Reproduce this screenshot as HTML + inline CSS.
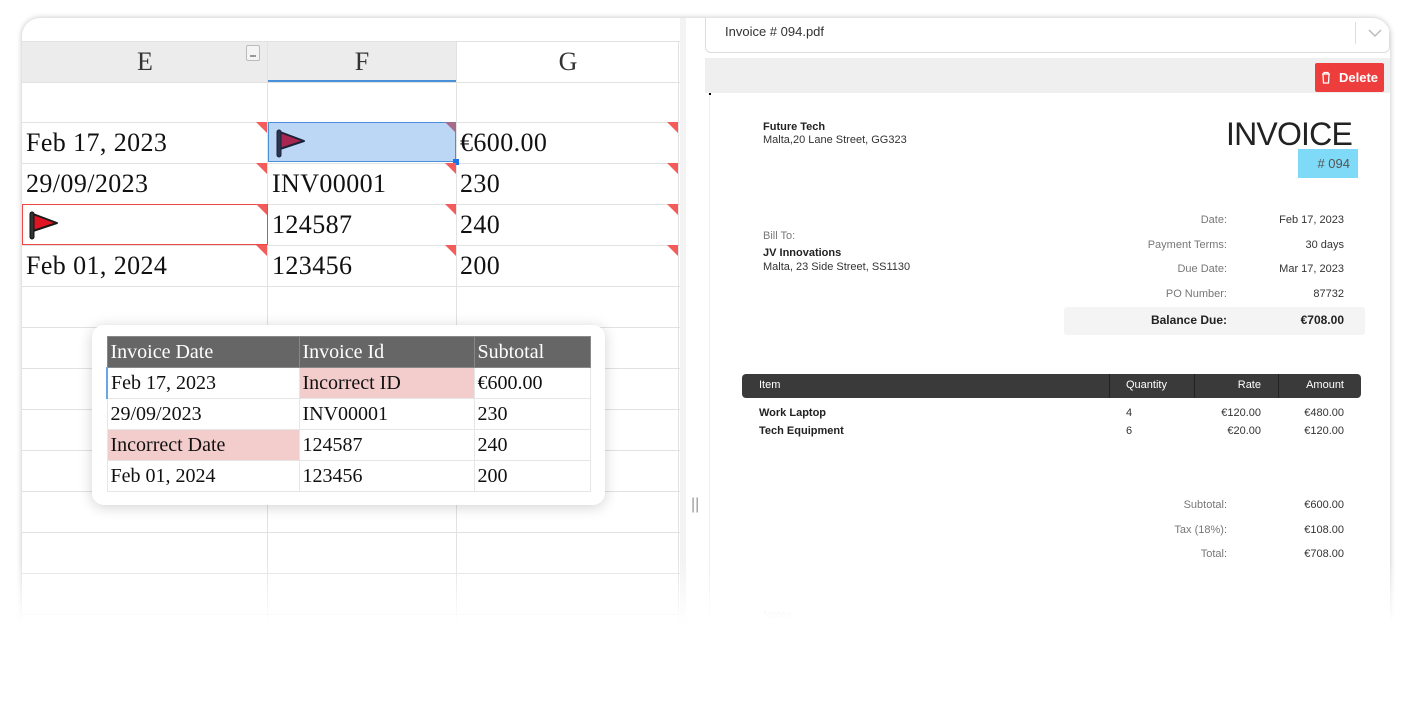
<!DOCTYPE html>
<html><head><meta charset="utf-8"><style>
*{box-sizing:border-box;margin:0;padding:0}
body{width:1412px;height:720px;background:#fff;position:relative;overflow:hidden;font-family:"Liberation Sans",sans-serif}
.card{position:absolute;left:22px;top:18px;width:1368px;height:640px;background:#fff;border-radius:18px;box-shadow:0 0 6px rgba(0,0,0,.25);overflow:hidden}
.abs{position:absolute}
.serif{font-family:"Liberation Serif",serif;color:#111}
.hl{position:absolute;height:1px;background:#e2e2e2}
.vl{position:absolute;width:1px;background:#e2e2e2}
.tri{position:absolute;width:0;height:0;border-top:11px solid #f45b5b;border-left:11px solid transparent}
.cell{position:absolute;font-size:26px;font-family:"Liberation Serif",serif;color:#111;line-height:41px;letter-spacing:0.4px}
.inv{position:absolute;font-size:11px;color:#333}
.r{text-align:right}
.fade{position:absolute;left:0;top:560px;width:1412px;height:160px;background:linear-gradient(rgba(255,255,255,0),#fff 40%)}
.pt td{border:1px solid #e6e6e6;height:31px;font-family:"Liberation Serif",serif;font-size:20px;color:#111;padding:0 3px;vertical-align:middle}
</style></head><body>
<div class="card">
 <div class="abs" style="left:0;top:24px;width:434px;height:40px;background:#ececec"></div>
 <div class="abs" style="left:246px;top:62px;width:188px;height:2px;background:#4a90d9"></div>
 <div class="hl" style="left:0;top:23px;width:660px"></div>
 <div class="hl" style="left:0;top:64px;width:660px"></div>
 <div class="abs serif" style="left:0;top:24px;width:246px;text-align:center;font-size:26px;line-height:40px;color:#333">E</div>
 <div class="abs serif" style="left:246px;top:24px;width:188px;text-align:center;font-size:26px;line-height:40px;color:#333">F</div>
 <div class="abs serif" style="left:435px;top:24px;width:222px;text-align:center;font-size:26px;line-height:40px;color:#333">G</div>
 <div class="abs" style="left:224px;top:27px;width:14px;height:16px;border:1px solid #bbb;border-radius:2px;background:#f4f4f4"></div>
 <div class="abs" style="left:228px;top:37px;width:6px;height:2px;background:#999"></div>
 <div class="hl" style="left:0;top:104px;width:660px"></div>
 <div class="hl" style="left:0;top:145px;width:660px"></div>
 <div class="hl" style="left:0;top:186px;width:660px"></div>
 <div class="hl" style="left:0;top:227px;width:660px"></div>
 <div class="hl" style="left:0;top:268px;width:660px"></div>
 <div class="hl" style="left:0;top:309px;width:660px"></div>
 <div class="hl" style="left:0;top:350px;width:660px"></div>
 <div class="hl" style="left:0;top:391px;width:660px"></div>
 <div class="hl" style="left:0;top:432px;width:660px"></div>
 <div class="hl" style="left:0;top:473px;width:660px"></div>
 <div class="hl" style="left:0;top:514px;width:660px"></div>
 <div class="hl" style="left:0;top:555px;width:660px"></div>
 <div class="hl" style="left:0;top:596px;width:660px"></div>
 <div class="vl" style="left:245px;top:23px;height:600px"></div>
 <div class="vl" style="left:434px;top:23px;height:600px"></div>
 <div class="vl" style="left:656px;top:23px;height:600px"></div>
 <div class="abs" style="left:658px;top:0;width:6px;height:640px;background:#f3f3f3"></div>
 <div class="abs" style="left:246px;top:104px;width:188px;height:40px;background:#bcd7f6;border:1.5px solid #4a90d9"></div>
 <div class="abs" style="left:431px;top:141px;width:6px;height:6px;background:#1a73e8"></div>
 <div class="abs" style="left:0;top:186px;width:246px;height:41px;border:1.5px solid #f04646"></div>
 <div class="tri" style="left:234px;top:104px"></div>
 <div class="tri" style="left:234px;top:145px"></div>
 <div class="tri" style="left:234px;top:186px"></div>
 <div class="tri" style="left:234px;top:227px"></div>
 <div class="tri" style="left:423px;top:104px;border-top-color:#a66b8a"></div>
 <div class="tri" style="left:423px;top:145px"></div>
 <div class="tri" style="left:423px;top:186px"></div>
 <div class="tri" style="left:423px;top:227px"></div>
 <div class="tri" style="left:645px;top:104px"></div>
 <div class="tri" style="left:645px;top:145px"></div>
 <div class="tri" style="left:645px;top:186px"></div>
 <div class="tri" style="left:645px;top:227px"></div>
 <div class="cell" style="left:4px;top:104px">Feb 17, 2023</div>
 <div class="cell" style="left:4px;top:145px">29/09/2023</div>
 <div class="cell" style="left:4px;top:227px">Feb 01, 2024</div>
 <div class="cell" style="left:250px;top:145px">INV00001</div>
 <div class="cell" style="left:250px;top:186px">124587</div>
 <div class="cell" style="left:250px;top:227px">123456</div>
 <div class="cell" style="left:438px;top:104px">€600.00</div>
 <div class="cell" style="left:438px;top:145px">230</div>
 <div class="cell" style="left:438px;top:186px">240</div>
 <div class="cell" style="left:438px;top:227px">200</div>
 <svg class="abs" style="left:252px;top:109px" width="36" height="32" viewBox="0 0 36 32"><path d="M6 5 L30 14 L6 22 Z" fill="#a8254f" stroke="#1a2238" stroke-width="2" stroke-linejoin="round"/><rect x="3" y="3" width="4" height="27" rx="2" fill="#2b3550" stroke="#1a2238" stroke-width="1"/></svg>
 <svg class="abs" style="left:5px;top:191px" width="36" height="32" viewBox="0 0 36 32"><path d="M6 5 L30 14 L6 22 Z" fill="#e01524" stroke="#1a1a1a" stroke-width="2" stroke-linejoin="round"/><rect x="3" y="3" width="4" height="27" rx="2" fill="#333" stroke="#111" stroke-width="1"/></svg>
 <div class="abs" style="left:669px;top:478px;font-size:16px;color:#999">||</div>

 <div class="abs" style="left:683px;top:-4px;width:685px;height:39px;border:1px solid #ddd;border-radius:0 0 6px 6px;background:#fff"></div>
 <div class="abs" style="left:703px;top:6px;font-size:13px;color:#333">Invoice # 094.pdf</div>
 <div class="abs" style="left:1333px;top:4px;width:1px;height:22px;background:#ddd"></div>
 <svg class="abs" style="left:1346px;top:10px" width="14" height="10"><path d="M1 2 L7 8 L13 2" fill="none" stroke="#bbb" stroke-width="1.5"/></svg>
 <div class="abs" style="left:683px;top:40px;width:685px;height:35px;background:#efefef"></div>
 <div class="abs" style="left:1293px;top:45px;width:69px;height:29px;background:#ee3d3d;border-radius:2px;color:#fff;font-size:13px;font-weight:bold;line-height:29px;padding-left:24px">Delete</div>
 <svg class="abs" style="left:1299px;top:53px" width="10" height="13"><path d="M1 3 H9 M3 3 V1.5 H7 V3 M2 3 L2.5 12 H7.5 L8 3" fill="none" stroke="#fff" stroke-width="1.3"/></svg>
 <div class="abs" style="left:687px;top:75px;width:681px;height:565px;background:#fff;border-left:1px solid #eee"></div>
 <div class="abs" style="left:687px;top:75px;width:2px;height:2px;background:#000"></div>

 <div class="inv" style="left:741px;top:103px;font-weight:bold;color:#222">Future Tech</div>
 <div class="inv" style="left:741px;top:116px">Malta,20 Lane Street, GG323</div>
 <div class="abs" style="left:1150px;top:98px;width:180px;text-align:right;font-size:32px;color:#222;letter-spacing:-0.8px">INVOICE</div>
 <div class="abs" style="left:1276px;top:131px;width:60px;height:29px;background:#7fdaf7"></div>
 <div class="abs" style="left:1276px;top:138px;width:52px;text-align:right;font-size:13px;color:#555">#&nbsp;094</div>

 <div class="inv" style="left:741px;top:212px;color:#777">Bill To:</div>
 <div class="inv" style="left:741px;top:229px;font-weight:bold;color:#222">JV Innovations</div>
 <div class="inv" style="left:741px;top:243px">Malta, 23 Side Street, SS1130</div>

 <div class="inv r" style="left:1040px;top:196px;width:165px;color:#777">Date:</div>
 <div class="inv r" style="left:1230px;top:196px;width:92px">Feb 17, 2023</div>
 <div class="inv r" style="left:1040px;top:221px;width:165px;color:#777">Payment Terms:</div>
 <div class="inv r" style="left:1230px;top:221px;width:92px">30 days</div>
 <div class="inv r" style="left:1040px;top:245px;width:165px;color:#777">Due Date:</div>
 <div class="inv r" style="left:1230px;top:245px;width:92px">Mar 17, 2023</div>
 <div class="inv r" style="left:1040px;top:270px;width:165px;color:#777">PO Number:</div>
 <div class="inv r" style="left:1230px;top:270px;width:92px">87732</div>
 <div class="abs" style="left:1042px;top:289px;width:301px;height:28px;background:#f4f4f4;border-radius:3px"></div>
 <div class="inv r" style="left:1040px;top:295px;width:165px;font-size:12px;font-weight:bold;color:#222">Balance Due:</div>
 <div class="inv r" style="left:1230px;top:295px;width:92px;font-size:12px;font-weight:bold;color:#222">€708.00</div>

 <div class="abs" style="left:720px;top:356px;width:619px;height:24px;background:#3a3a3a;border-radius:4px"></div>
 <div class="abs" style="left:1087px;top:356px;width:1px;height:24px;background:#222"></div>
 <div class="abs" style="left:1172px;top:356px;width:1px;height:24px;background:#222"></div>
 <div class="abs" style="left:1256px;top:356px;width:1px;height:24px;background:#222"></div>
 <div class="inv" style="left:737px;top:361px;color:#fff">Item</div>
 <div class="inv" style="left:1104px;top:361px;color:#fff">Quantity</div>
 <div class="inv r" style="left:1180px;top:361px;width:59px;color:#fff">Rate</div>
 <div class="inv r" style="left:1260px;top:361px;width:62px;color:#fff">Amount</div>
 <div class="inv" style="left:737px;top:389px;font-weight:bold;color:#222">Work Laptop</div>
 <div class="inv" style="left:737px;top:407px;font-weight:bold;color:#222">Tech Equipment</div>
 <div class="inv" style="left:1104px;top:389px">4</div>
 <div class="inv" style="left:1104px;top:407px">6</div>
 <div class="inv r" style="left:1160px;top:389px;width:79px">€120.00</div>
 <div class="inv r" style="left:1160px;top:407px;width:79px">€20.00</div>
 <div class="inv r" style="left:1240px;top:389px;width:82px">€480.00</div>
 <div class="inv r" style="left:1240px;top:407px;width:82px">€120.00</div>

 <div class="inv r" style="left:1040px;top:481px;width:165px;color:#777">Subtotal:</div>
 <div class="inv r" style="left:1230px;top:481px;width:92px">€600.00</div>
 <div class="inv r" style="left:1040px;top:506px;width:165px;color:#777">Tax (18%):</div>
 <div class="inv r" style="left:1230px;top:506px;width:92px">€108.00</div>
 <div class="inv r" style="left:1040px;top:530px;width:165px;color:#777">Total:</div>
 <div class="inv r" style="left:1230px;top:530px;width:92px">€708.00</div>
 <div class="inv" style="left:741px;top:591px;color:#ddd">Notes:</div>
 <div class="inv" style="left:741px;top:609px;color:#eee">Products Sold</div>
</div>

<div class="abs" style="left:92px;top:325px;width:513px;height:180px;background:#fff;border-radius:12px;box-shadow:0 2px 14px rgba(0,0,0,.18)"></div>
<table class="pt abs" style="left:106px;top:336px;border-collapse:collapse;width:485px">
 <tr style="background:#666"><td style="width:192px;color:#fff;border-color:#888;height:31px">Invoice Date</td><td style="width:175px;color:#fff;border-color:#888">Invoice Id</td><td style="color:#fff;border-color:#888">Subtotal</td></tr>
 <tr><td style="border-left:2px solid #6aa5e8">Feb 17, 2023</td><td style="background:#f3cccc">Incorrect ID</td><td>€600.00</td></tr>
 <tr><td>29/09/2023</td><td>INV00001</td><td>230</td></tr>
 <tr><td style="background:#f3cccc">Incorrect Date</td><td>124587</td><td>240</td></tr>
 <tr><td>Feb 01, 2024</td><td>123456</td><td>200</td></tr>
</table>
<div class="fade"></div>
</body></html>
